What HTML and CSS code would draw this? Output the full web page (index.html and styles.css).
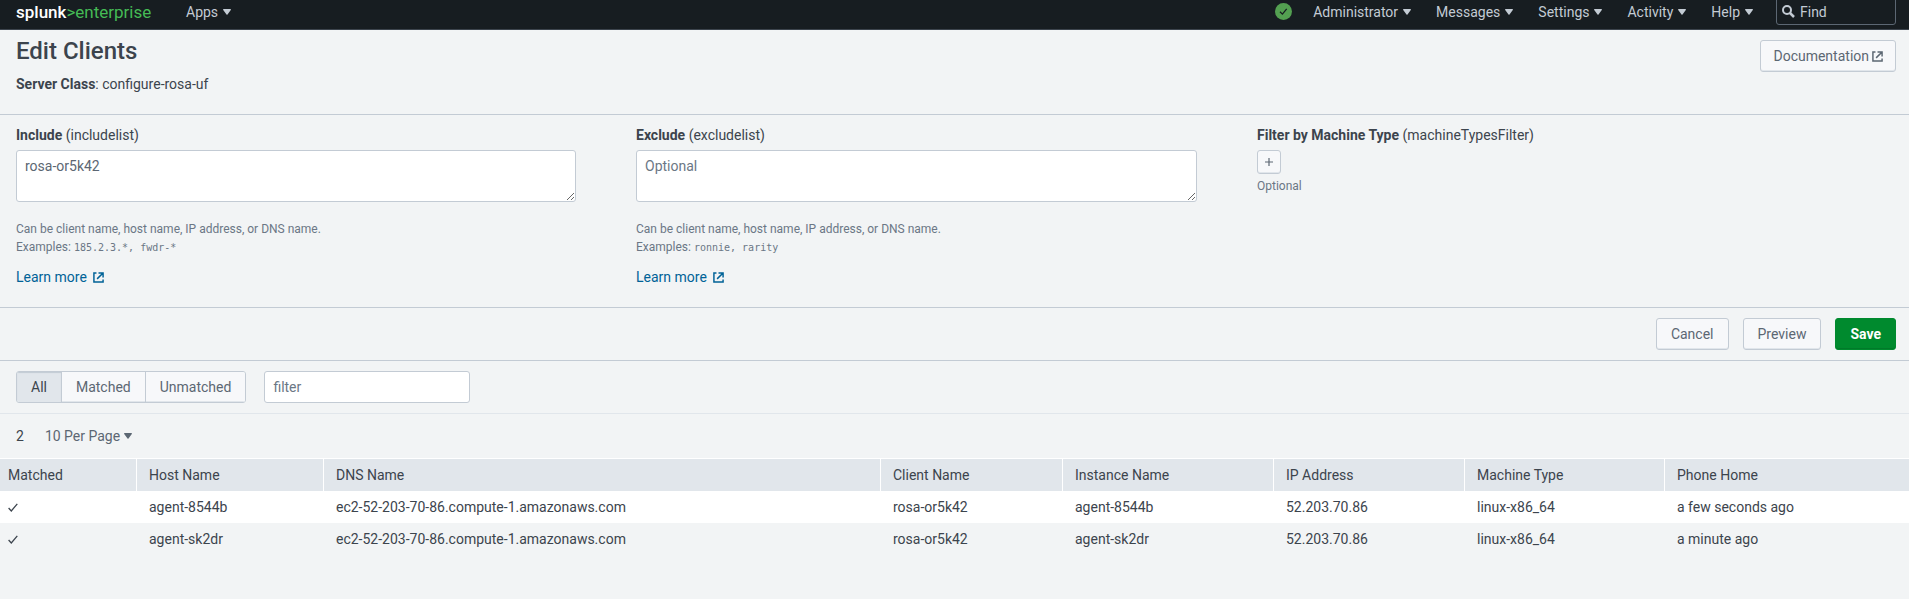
FILE: index.html
```html
<!DOCTYPE html>
<html lang="en">
<head>
<meta charset="utf-8">
<title>Edit Clients</title>
<link rel="stylesheet" href="styles.css">
</head>
<body>
<svg class="sprite" aria-hidden="true">
  <symbol id="caret" viewBox="0 0 8 6"><path d="M0.6 0h6.8c.5 0 .7.5.4.9L4.5 5.500c-.3.4-.7.4-1 0L.2.9C-.1.5.1 0 .6 0z" fill="currentColor"/></symbol>
  <symbol id="external" viewBox="0 0 12 12"><path d="M3.800 1H1v10h10V8.200M6 1h5v5M11 1L4.500 7.500" fill="none" stroke="currentColor" stroke-width="1.600"/></symbol>
  <symbol id="check" viewBox="0 0 10 9"><path d="M.6 5l2.700 2.900L9.300.8" fill="none" stroke="currentColor" stroke-width="1.300"/></symbol>
</svg>
<header class="topbar">
  <a class="logo" href="#"><span class="logo-name">splunk</span><span class="logo-product">&gt;enterprise</span></a>
  <nav class="nav nav-main"><button class="nav-item">Apps<svg class="caret"><use href="#caret"/></svg></button></nav>
  <svg class="health" viewBox="0 0 17 17" role="img" aria-label="Healthy"><circle cx="8.500" cy="8.500" r="8.500" fill="#53a051"/><path d="M5 8.800l2.400 2.300 4.300-5.200" fill="none" stroke="#171d21" stroke-width="1.300"/></svg>
  <nav class="nav">
    <button class="nav-item">Administrator<svg class="caret"><use href="#caret"/></svg></button>
    <button class="nav-item">Messages<svg class="caret"><use href="#caret"/></svg></button>
    <button class="nav-item">Settings<svg class="caret"><use href="#caret"/></svg></button>
    <button class="nav-item">Activity<svg class="caret"><use href="#caret"/></svg></button>
    <button class="nav-item">Help<svg class="caret"><use href="#caret"/></svg></button>
  </nav>
  <label class="find"><svg class="find-icon" viewBox="0 0 13 13"><circle cx="5" cy="5" r="4" fill="none" stroke="currentColor" stroke-width="2"/><path d="M8 8l4 4" stroke="currentColor" stroke-width="2.500"/></svg><input class="find-input" type="text" placeholder="Find" aria-label="Find"></label>
</header>
<main>
  <section class="page-head">
    <div>
      <h1 class="title">Edit Clients</h1>
      <p class="subtitle"><strong>Server Class</strong>: configure-rosa-uf</p>
    </div>
    <button class="btn btn-docs">Documentation<svg class="ext ext-tight"><use href="#external"/></svg></button>
  </section>
  <section class="filters">
    <div class="field">
      <label class="label" for="include"><strong>Include</strong> (includelist)</label>
      <textarea class="area" id="include">rosa-or5k42</textarea>
      <p class="hint">Can be client name, host name, IP address, or DNS name.<br>Examples: <code>185.2.3.*, fwdr-*</code></p>
      <a class="learn" href="#">Learn more<svg class="ext"><use href="#external"/></svg></a>
    </div>
    <div class="field">
      <label class="label" for="exclude"><strong>Exclude</strong> (excludelist)</label>
      <textarea class="area" id="exclude" placeholder="Optional"></textarea>
      <p class="hint">Can be client name, host name, IP address, or DNS name.<br>Examples: <code>ronnie, rarity</code></p>
      <a class="learn" href="#">Learn more<svg class="ext"><use href="#external"/></svg></a>
    </div>
    <div class="field">
      <label class="label" for="add-type"><strong>Filter by Machine Type</strong> (machineTypesFilter)</label>
      <button class="btn btn-add" id="add-type"><svg class="plus" viewBox="0 0 8 8"><path d="M4 0v8M0 4h8" stroke="currentColor" stroke-width="1.200"/></svg></button>
      <p class="note">Optional</p>
    </div>
  </section>
  <section class="actions">
    <button class="btn">Cancel</button>
    <button class="btn">Preview</button>
    <button class="btn btn-primary">Save</button>
  </section>
  <section class="toolbar">
    <div class="tabs">
      <button class="tab tab-active">All</button><button class="tab">Matched</button><button class="tab">Unmatched</button>
    </div>
    <input class="filter-input" type="text" placeholder="filter" aria-label="filter">
  </section>
  <section class="pager">
    <span>2</span>
    <button class="per-page">10 Per Page<svg class="caret"><use href="#caret"/></svg></button>
  </section>
  <table class="clients">
    <colgroup><col class="c-matched"><col class="c-host"><col><col class="c-client"><col class="c-instance"><col class="c-ip"><col class="c-machine"><col class="c-phone"></colgroup>
    <thead><tr><th>Matched</th><th>Host Name</th><th>DNS Name</th><th>Client Name</th><th>Instance Name</th><th>IP Address</th><th>Machine Type</th><th>Phone Home</th></tr></thead>
    <tbody>
      <tr><td><svg class="check" role="img" aria-label="Yes"><use href="#check"/></svg></td><td>agent-8544b</td><td>ec2-52-203-70-86.compute-1.amazonaws.com</td><td>rosa-or5k42</td><td>agent-8544b</td><td>52.203.70.86</td><td>linux-x86_64</td><td>a few seconds ago</td></tr>
      <tr><td><svg class="check" role="img" aria-label="Yes"><use href="#check"/></svg></td><td>agent-sk2dr</td><td>ec2-52-203-70-86.compute-1.amazonaws.com</td><td>rosa-or5k42</td><td>agent-sk2dr</td><td>52.203.70.86</td><td>linux-x86_64</td><td>a minute ago</td></tr>
    </tbody>
  </table>
</main>
</body>
</html>
```
FILE: styles.css
```css
* { box-sizing: border-box; }
body { margin: 0; background: #f2f4f5; color: #3c444d; font: 14px/20px Roboto, "Liberation Sans", sans-serif; }
button, input, textarea { font: inherit; color: inherit; }
p, h1 { margin: 0; }
strong { font-weight: 700; }
.sprite { display: none; }

.topbar { display: flex; align-items: center; height: 30px; padding: 0 13px 6px 16px; background: #171d21; border-bottom: 1px solid #3c444d; color: #c3cbd4; }
.logo { font-size: 17px; text-decoration: none; width: 170px; }
.logo-name { color: #fff; font-weight: 500; }
.logo-product { color: #45bb55; }
.nav { display: flex; gap: 25px; }
.nav-main { margin-right: auto; }
.nav-item, .per-page { display: flex; align-items: center; gap: 5px; padding: 0; border: 0; background: none; }
.caret { width: 8px; height: 6px; }
.health { width: 17px; height: 17px; margin-right: 21px; }
.find { display: flex; align-items: center; align-self: flex-end; gap: 5px; width: 120px; height: 32px; margin: -10px 0 -2px 23px; padding: 5px 5px 0; border: 1px solid #5c6773; border-radius: 3px; }
.find-icon { width: 13px; height: 13px; flex: none; }
.find-input { width: 100%; padding: 0; border: 0; background: none; }
.find-input::placeholder { color: #c3cbd4; }

.page-head { display: flex; justify-content: space-between; align-items: flex-start; padding: 10px 13px 20px 16px; border-bottom: 1px solid #c3cbd4; }
.title { font-size: 24px; line-height: 22px; font-weight: 500; }
.subtitle { padding-top: 12px; }
.btn { display: inline-flex; align-items: center; justify-content: center; height: 32px; padding: 0 14px; border: 1px solid #c3cbd4; border-radius: 3px; background: #f7f8fa; box-shadow: inset 0 -1px 0 #e1e6eb; color: #5c6773; }
.btn-docs { padding: 0 12px; }
.ext { width: 11px; height: 11px; margin-left: 6px; }
.ext-tight { margin-left: 3px; }

.filters { display: grid; grid-template-columns: 560px 561px 1fr; column-gap: 60px; padding: 10px 16px 20px; border-bottom: 1px solid #c3cbd4; }
.label { display: block; margin-bottom: 5px; }
.area { display: block; width: 100%; height: 52px; padding: 5px 8px; border: 1px solid #c3cbd4; border-radius: 3px; background: #fff; color: #5c6773; }
.area::placeholder, .filter-input::placeholder { color: #6b7785; opacity: 1; }
.hint, .note { font-size: 12px; line-height: 18px; color: #6b7785; }
.hint { margin: 18px 0 11px; }
.note { margin-top: 3px; }
.hint code { font-family: "DejaVu Sans Mono", monospace; font-size: 10px; line-height: 10px; }
.learn { display: flex; align-items: center; width: fit-content; color: #006297; text-decoration: none; }
.btn-add { display: flex; width: 24px; height: 24px; padding: 0; }
.plus { width: 8px; height: 8px; }

.actions { display: flex; justify-content: flex-end; gap: 14px; padding: 10px 13px; border-bottom: 1px solid #c3cbd4; }
.btn-primary { border-color: #008a2e; background: #008a2e; box-shadow: inset 0 -1px 0 #007a29; color: #fff; font-weight: 700; }

.toolbar { display: flex; gap: 18px; padding: 10px 16px; border-bottom: 1px solid #e1e6eb; }
.tabs { display: flex; height: 32px; border: 1px solid #c3cbd4; border-radius: 3px; overflow: hidden; }
.tab { padding: 0 14px; border: 0; background: #f7f8fa; box-shadow: inset 0 -1px 0 #e1e6eb; color: #5c6773; }
.tab + .tab { border-left: 1px solid #c3cbd4; }
.tab-active { background: #e1e6eb; color: #3c444d; box-shadow: inset 0 1px 1px #c3cbd4; }
.filter-input { width: 206px; height: 32px; padding: 0 8px; border: 1px solid #c3cbd4; border-radius: 3px; background: #fff; }
.pager { display: flex; align-items: center; gap: 21px; height: 44px; padding: 0 16px; }
.per-page { gap: 4px; color: #5c6773; }

.clients { width: 100%; table-layout: fixed; border-collapse: separate; border-spacing: 0; border-top: 1px solid #fff; }
.clients th, .clients td { height: 32px; padding: 0 12px; text-align: left; font-weight: 400; }
.clients td { padding-left: 13px; }
.clients th { background: #e1e6eb; }
.clients th + th { border-left: 1px solid #fff; }
.clients th:first-child, .clients td:first-child { padding-left: 8px; }
.clients tbody tr:nth-child(odd) { background: #fff; }
.check { width: 10px; height: 9px; display: block; }
.c-matched { width: 136px; }
.c-host { width: 187px; }
.c-client { width: 182px; }
.c-instance { width: 211px; }
.c-ip { width: 191px; }
.c-machine { width: 200px; }
.c-phone { width: 245px; }
```
